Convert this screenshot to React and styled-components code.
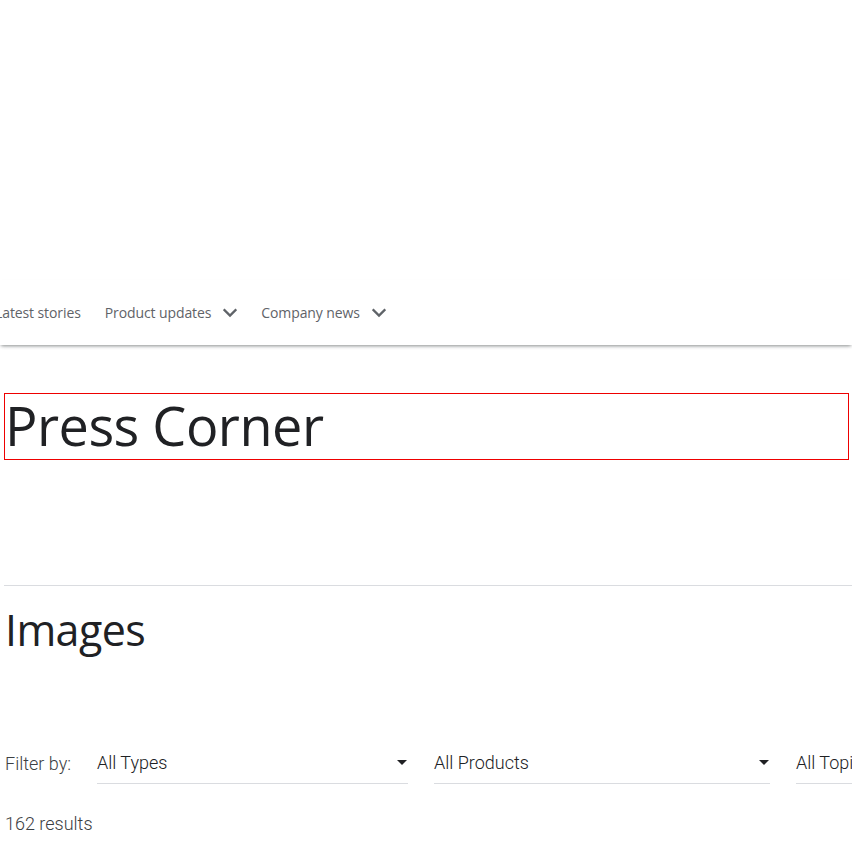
import React from 'react';
import styled, { createGlobalStyle } from 'styled-components';

const GlobalStyle = createGlobalStyle`
  html, body {
    margin: 0;
    padding: 0;
    background: #fff;
    overflow: hidden;
  }
  body {
    font-family: Roboto, "Liberation Sans", sans-serif;
    color: #202124;
  }
`;

const Chevron = () => (
  <svg width="14" height="14" viewBox="5 4.5 14 14" aria-hidden="true">
    <path d="M5.7 8.7 12 15l6.3-6.3" fill="none" stroke="#5f6368" strokeWidth="2.3" />
  </svg>
);

const Caret = () => (
  <svg width="10" height="5" viewBox="0 0 10 5" aria-hidden="true">
    <path d="M0 0h10L5 5z" fill="#202124" />
  </svg>
);

function App() {
  const filters = [
    { label: 'All Types', width: 310 },
    { label: 'All Products', width: 335 },
    { label: 'All Topics', width: 200 },
  ];
  return (
    <>
      <GlobalStyle />
      <Page>
        <TopSpace />
        <NavBar>
          <NavList>
            <NavItem>Latest stories</NavItem>
            <NavItem>
              Product updates <Chevron />
            </NavItem>
            <NavItem>
              Company news <Chevron />
            </NavItem>
          </NavList>
        </NavBar>
        <Content>
          <Title>Press Corner</Title>
          <Divider />
          <SectionTitle>Images</SectionTitle>
          <FilterRow>
            <FilterLabel>Filter by:</FilterLabel>
            {filters.map((f) => (
              <Select key={f.label} $width={f.width}>
                <span>{f.label}</span>
                <Caret />
              </Select>
            ))}
          </FilterRow>
          <Results>162 results</Results>
        </Content>
      </Page>
    </>
  );
}

export default App;

// STYLE

const Page = styled.div`
  width: 852px;
  height: 852px;
  overflow: hidden;
`;

const TopSpace = styled.div`
  height: 280px;
`;

const NavBar = styled.nav`
  position: relative;
  height: 65px;
  display: flex;
  align-items: center;
  background: #fff;
  box-shadow: 0 2px 3px -1px rgba(60, 64, 67, 0.45), 0 3px 4px -2px rgba(60, 64, 67, 0.2);
`;

const NavList = styled.div`
  display: flex;
  align-items: center;
  gap: 24px;
  margin-left: -5px;
  margin-top: -1px;
`;

const NavItem = styled.div`
  display: flex;
  align-items: center;
  gap: 12px;
  font-family: "Open Sans", Roboto, sans-serif;
  font-size: 14px;
  letter-spacing: -0.1px;
  color: #5f6368;
  white-space: nowrap;
`;

const Content = styled.div`
  padding: 0 0 0 4px;
`;

const Title = styled.h1`
  margin: 48px 3px 0 0;
  height: 65px;
  border: 1px solid #e00;
  font-family: "Open Sans", Roboto, sans-serif;
  font-weight: 400;
  font-size: 54px;
  line-height: 62px;
  letter-spacing: -0.5px;
  color: #202124;
`;

const Divider = styled.hr`
  margin: 125px 0 0 0;
  border: 0;
  border-top: 1px solid #dadce0;
`;

const SectionTitle = styled.h2`
  margin: 16px 0 0 1px;
  font-family: "Open Sans", Roboto, sans-serif;
  font-weight: 400;
  font-size: 43px;
  line-height: 56px;
  letter-spacing: -0.6px;
  color: #202124;
`;

const FilterRow = styled.div`
  display: flex;
  align-items: flex-end;
  margin-top: 94px;
  white-space: nowrap;
`;

const FilterLabel = styled.div`
  flex: 0 0 92px;
  padding: 0 0 10px 1px;
  font-size: 18px;
  font-weight: 300;
  color: #3c4043;
`;

const Select = styled.div`
  flex: 0 0 ${(p) => p.$width}px;
  margin-right: 26px;
  display: flex;
  align-items: center;
  justify-content: space-between;
  padding: 0 1px 10px 0;
  border-bottom: 1px solid #dadce0;
  font-size: 18px;
  font-weight: 300;
  color: #202124;
`;

const Results = styled.div`
  margin-top: 29px;
  padding-left: 1px;
  font-size: 18px;
  font-weight: 300;
  color: #3c4043;
`;
